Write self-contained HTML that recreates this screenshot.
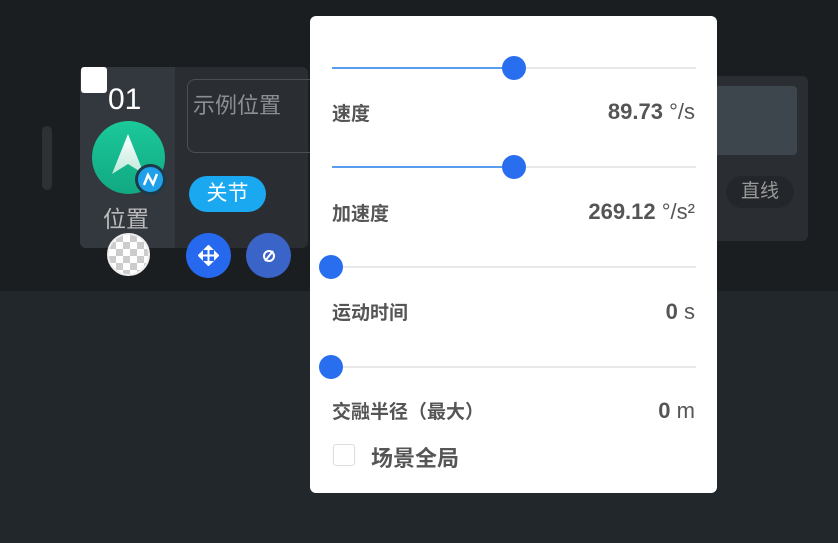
<!DOCTYPE html><html><head><meta charset="utf-8"><style>
*{margin:0;padding:0;box-sizing:border-box}
body{width:838px;height:543px;overflow:hidden;background:#22272b;font-family:"Liberation Sans","Noto Sans CJK SC",sans-serif;position:relative}
.a{position:absolute}
.lbl{position:absolute;left:332px;font-size:19px;font-weight:bold;color:#555}
.val{position:absolute;right:22px;font-size:22px;color:#555}
.val b{font-weight:bold}
.track{position:absolute;left:22px;width:364px;height:2px;background:#e8e8e8}
.thumb{position:absolute;width:24px;height:24px;border-radius:50%;background:#2a6ef0}
</style></head><body>
<div class="a" style="left:0;top:0;width:838px;height:291px;background:#1b1e21"></div>
<div class="a" style="left:42px;top:126px;width:10px;height:64px;border-radius:5px;background:#2c3136"></div>
<div class="a" style="left:80px;top:67px;width:228px;height:181px;border-radius:6px;background:#2a2e33"></div>
<div class="a" style="left:80px;top:67px;width:95px;height:181px;border-radius:6px 0 0 6px;background:#33383e"></div>
<div class="a" style="left:81px;top:67px;width:26px;height:26px;background:#fff;border-radius:3px"></div>
<div class="a" style="left:108px;top:83px;color:#fff;font-size:30px">01</div>
<div class="a" style="left:92px;top:121px;width:73px;height:73px;border-radius:50%;background:linear-gradient(#1bc99a,#12a882)"></div>
<svg class="a" style="left:110px;top:134px" width="36" height="46"><defs><linearGradient id="g" x1="0" y1="0" x2="0" y2="1"><stop offset="0" stop-color="#fff"/><stop offset="1" stop-color="#bfeadb"/></linearGradient></defs><path d="M18 0 L34 40 L18 30 L2 40Z" fill="url(#g)"/></svg>
<div class="a" style="left:135px;top:164px;width:31px;height:31px;border-radius:50%;background:#1fa0e8;border:3px solid #1d3a4a"></div>
<svg class="a" style="left:141px;top:170px" width="19" height="19"><path d="M3 15 L7 5 L12 14 L16 4" stroke="#fff" stroke-width="2.5" fill="none"/></svg>
<div class="a" style="left:103px;top:200px;color:#bbb;font-size:23px">位置</div>
<div class="a" style="left:107px;top:233px;width:43px;height:43px;border-radius:50%;background:conic-gradient(#ccc 25%,#fff 0 50%,#ccc 0 75%,#fff 0);background-size:14px 14px;border:2px solid #eee"></div>
<div class="a" style="left:187px;top:79px;width:130px;height:74px;border:1px solid #4a4f55;border-radius:8px"></div>
<div class="a" style="left:193px;top:88px;color:#8a8f95;font-size:22px">示例位置</div>
<div class="a" style="left:189px;top:176px;width:77px;height:36px;border-radius:18px;background:#1aa8f0;color:#fff;font-size:21px;text-align:center;line-height:36px">关节</div>
<div class="a" style="left:186px;top:233px;width:45px;height:45px;border-radius:50%;background:#2668ee"></div>
<svg class="a" style="left:198px;top:245px" width="21" height="21"><path d="M10.5 2v17M2 10.5h17M10.5 1l-3 3h6zM10.5 20l-3-3h6zM1 10.5l3-3v6zM20 10.5l-3-3v6z" stroke="#fff" stroke-width="2" fill="#fff"/></svg>
<div class="a" style="left:246px;top:233px;width:45px;height:45px;border-radius:50%;background:#3a64c8"></div>
<svg class="a" style="left:259px;top:246px" width="20" height="20"><circle cx="10" cy="10" r="5" stroke="#fff" stroke-width="2" fill="none"/><path d="M6 15L14 5" stroke="#fff" stroke-width="2"/></svg>
<div class="a" style="left:700px;top:76px;width:108px;height:165px;border-radius:6px;background:#2a2e33"></div>
<div class="a" style="left:700px;top:86px;width:97px;height:69px;border-radius:4px;background:#3d454d"></div>
<div class="a" style="left:726px;top:176px;width:68px;height:32px;border-radius:16px;background:#23272b;color:#999;font-size:19px;text-align:center;line-height:32px">直线</div>
<div class="a" style="left:304px;top:248px;width:0;height:0;border:7px solid transparent;border-right-color:#fff"></div>
<div class="a" style="left:310px;top:16px;width:407px;height:477px;background:#fff;border-radius:6px">
 <div class="track" style="top:51px;background:linear-gradient(90deg,#5a9cf0 50%,#e8e8e8 50%)"></div><div class="thumb" style="left:192px;top:40px"></div>
 <div class="track" style="top:150px;background:linear-gradient(90deg,#5a9cf0 50%,#e8e8e8 50%)"></div><div class="thumb" style="left:192px;top:139px"></div>
 <div class="track" style="top:250px"></div><div class="thumb" style="left:9px;top:239px"></div>
 <div class="track" style="top:350px"></div><div class="thumb" style="left:9px;top:339px"></div>
 <div class="val" style="top:83px"><b>89.73</b> °/s</div>
 <div class="val" style="top:183px"><b>269.12</b> °/s²</div>
 <div class="val" style="top:283px"><b>0</b> s</div>
 <div class="val" style="top:382px"><b>0</b> m</div>
 <div class="a" style="left:23px;top:428px;width:22px;height:22px;border:1px solid #ddd;border-radius:3px"></div>
 <div class="a" style="left:61px;top:425px;font-size:22px;font-weight:bold;color:#555">场景全局</div>
</div>
<div class="lbl" style="top:99px">速度</div>
<div class="lbl" style="top:199px">加速度</div>
<div class="lbl" style="top:298px">运动时间</div>
<div class="lbl" style="top:397px">交融半径（最大）</div>
</body></html>
